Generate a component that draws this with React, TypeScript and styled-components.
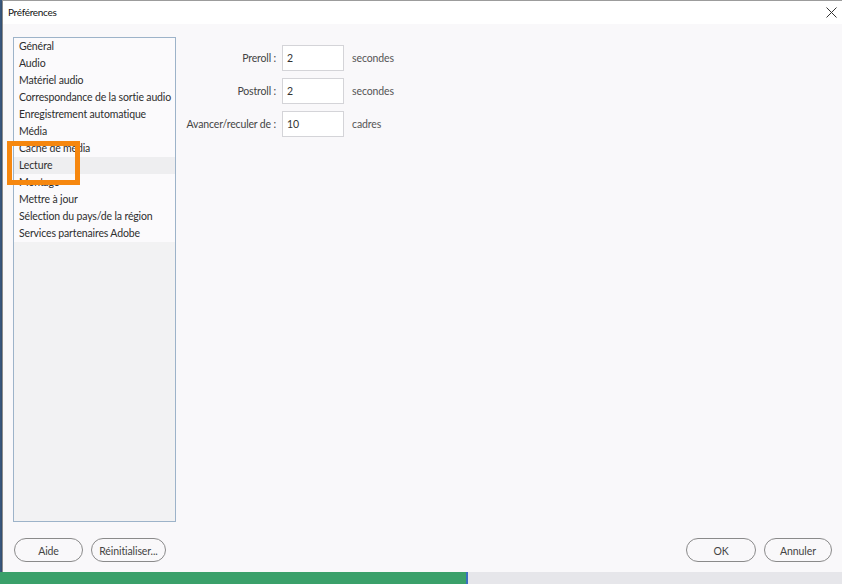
import React, { useState } from "react";
import styled, { createGlobalStyle } from "styled-components";

const GlobalStyle = createGlobalStyle`
  html, body {
    margin: 0;
    padding: 0;
    background: #e6e6ea;
    overflow: hidden;
  }
  * { box-sizing: border-box; }
`

const Page = styled.div`
  position: relative;
  width: 842px;
  height: 584px;
  display: flex;
  flex-direction: column;
  font-family: Lato, "Noto Sans", sans-serif;
  color: #333;
`

const Desktop = styled.div`
  display: flex;
  height: 572px;
`

const LeftStrip = styled.div`
  width: 2px;
  background: #3a5a80;
`

const Window = styled.div`
  flex: 1;
  display: flex;
  flex-direction: column;
  background: #f9f8fa;
  border-left: 1px solid #8c8c8c;
  border-top: 1px solid #9c9c9c;
  box-shadow: 0 1px 2px rgba(0, 0, 0, 0.35);
`

const TitleBar = styled.div`
  height: 23px;
  display: flex;
  align-items: center;
  justify-content: space-between;
  padding: 0 4px 1px 5px;
  background: #ffffff;
  font-size: 10px;
  letter-spacing: -0.3px;
  color: #111;
`

const CloseBtn = styled.button`
  width: 14px;
  height: 14px;
  padding: 0;
  border: none;
  background: transparent;
  display: flex;
  align-items: center;
  justify-content: center;
  cursor: pointer;
`

const Body = styled.div`
  flex: 1;
  display: flex;
  padding: 13px 10px 0 10px;
`

const List = styled.ul`
  width: 163px;
  height: 485px;
  margin: 0;
  padding: 0;
  list-style: none;
  border: 1px solid #9db3c9;
  background: #f2f2f3;
`

const Item = styled.li<{ $active?: boolean }>`
  height: 17px;
  line-height: 16px;
  padding-left: 5px;
  font-size: 10.5px;
  letter-spacing: -0.15px;
  white-space: nowrap;
  color: #2e2e2e;
  background: ${(p) => (p.$active ? "#eeeef0" : "#fbfafc")};
  cursor: default;
`

const Form = styled.div`
  display: grid;
  grid-template-columns: 100px 62px auto;
  grid-auto-rows: 26px;
  column-gap: 6px;
  row-gap: 7px;
  align-items: center;
  align-content: start;
  margin-top: 8px;
`

const Label = styled.span`
  text-align: right;
  font-size: 10.5px;
  letter-spacing: -0.15px;
  color: #444;
  white-space: nowrap;
`

const Input = styled.input`
  width: 62px;
  height: 26px;
  padding: 0 4px;
  border: 1px solid #d4d4d8;
  background: #fff;
  font-family: inherit;
  font-size: 10.5px;
  color: #333;
  outline: none;
`

const Unit = styled.span`
  margin-left: 2px;
  font-size: 10.5px;
  letter-spacing: -0.1px;
  color: #555;
`

const Footer = styled.div`
  display: flex;
  justify-content: space-between;
  padding: 16px 10px 10px 11px;
`

const Group = styled.div`
  display: flex;
  gap: 8px;
`

const Button = styled.button<{ $w: number }>`
  width: ${(p) => p.$w}px;
  height: 24px;
  padding: 1px 0 0 0;
  border: 1px solid #8a8a8a;
  border-radius: 12px;
  background: #f9f8fa;
  font-family: inherit;
  font-size: 10.5px;
  letter-spacing: -0.1px;
  color: #444;
  cursor: pointer;
`

const Taskbar = styled.div`
  height: 12px;
  display: flex;
  background: #e6e6ea;
`

const GreenPart = styled.div`
  width: 468px;
  background: #3aa06a;
  border-right: 2px solid #3a6fc0;
`

const Highlight = styled.div`
  position: absolute;
  left: 7px;
  top: 141px;
  width: 73px;
  height: 44px;
  border: 5px solid #f6870f;
  pointer-events: none;
`

const items = [
  "Général",
  "Audio",
  "Matériel audio",
  "Correspondance de la sortie audio",
  "Enregistrement automatique",
  "Média",
  "Cache de média",
  "Lecture",
  "Montage",
  "Mettre à jour",
  "Sélection du pays/de la région",
  "Services partenaires Adobe",
]

export default function App(): JSX.Element {
  const [active, setActive] = useState("Lecture")
  const [preroll, setPreroll] = useState("2")
  const [postroll, setPostroll] = useState("2")
  const [step, setStep] = useState("10")

  return (
    <Page>
      <GlobalStyle />
      <Desktop>
        <LeftStrip />
        <Window>
          <TitleBar>
            <span>Préférences</span>
            <CloseBtn aria-label="Fermer">
              <svg width="11" height="11" viewBox="0 0 11 11">
                <path d="M0.5 0.5 L10.5 10.5 M10.5 0.5 L0.5 10.5" stroke="#333" strokeWidth="1" />
              </svg>
            </CloseBtn>
          </TitleBar>
          <Body>
            <List>
              {items.map((it) => (
                <Item key={it} $active={it === active} onClick={() => setActive(it)}>
                  {it}
                </Item>
              ))}
            </List>
            <Form>
              <Label>Preroll :</Label>
              <Input value={preroll} onChange={(e) => setPreroll(e.target.value)} />
              <Unit>secondes</Unit>
              <Label>Postroll :</Label>
              <Input value={postroll} onChange={(e) => setPostroll(e.target.value)} />
              <Unit>secondes</Unit>
              <Label>Avancer/reculer de :</Label>
              <Input value={step} onChange={(e) => setStep(e.target.value)} />
              <Unit>cadres</Unit>
            </Form>
          </Body>
          <Footer>
            <Group>
              <Button $w={69}>Aide</Button>
              <Button $w={75}>Réinitialiser...</Button>
            </Group>
            <Group>
              <Button $w={70}>OK</Button>
              <Button $w={68}>Annuler</Button>
            </Group>
          </Footer>
        </Window>
      </Desktop>
      <Taskbar>
        <GreenPart />
      </Taskbar>
      <Highlight />
    </Page>
  )
}
